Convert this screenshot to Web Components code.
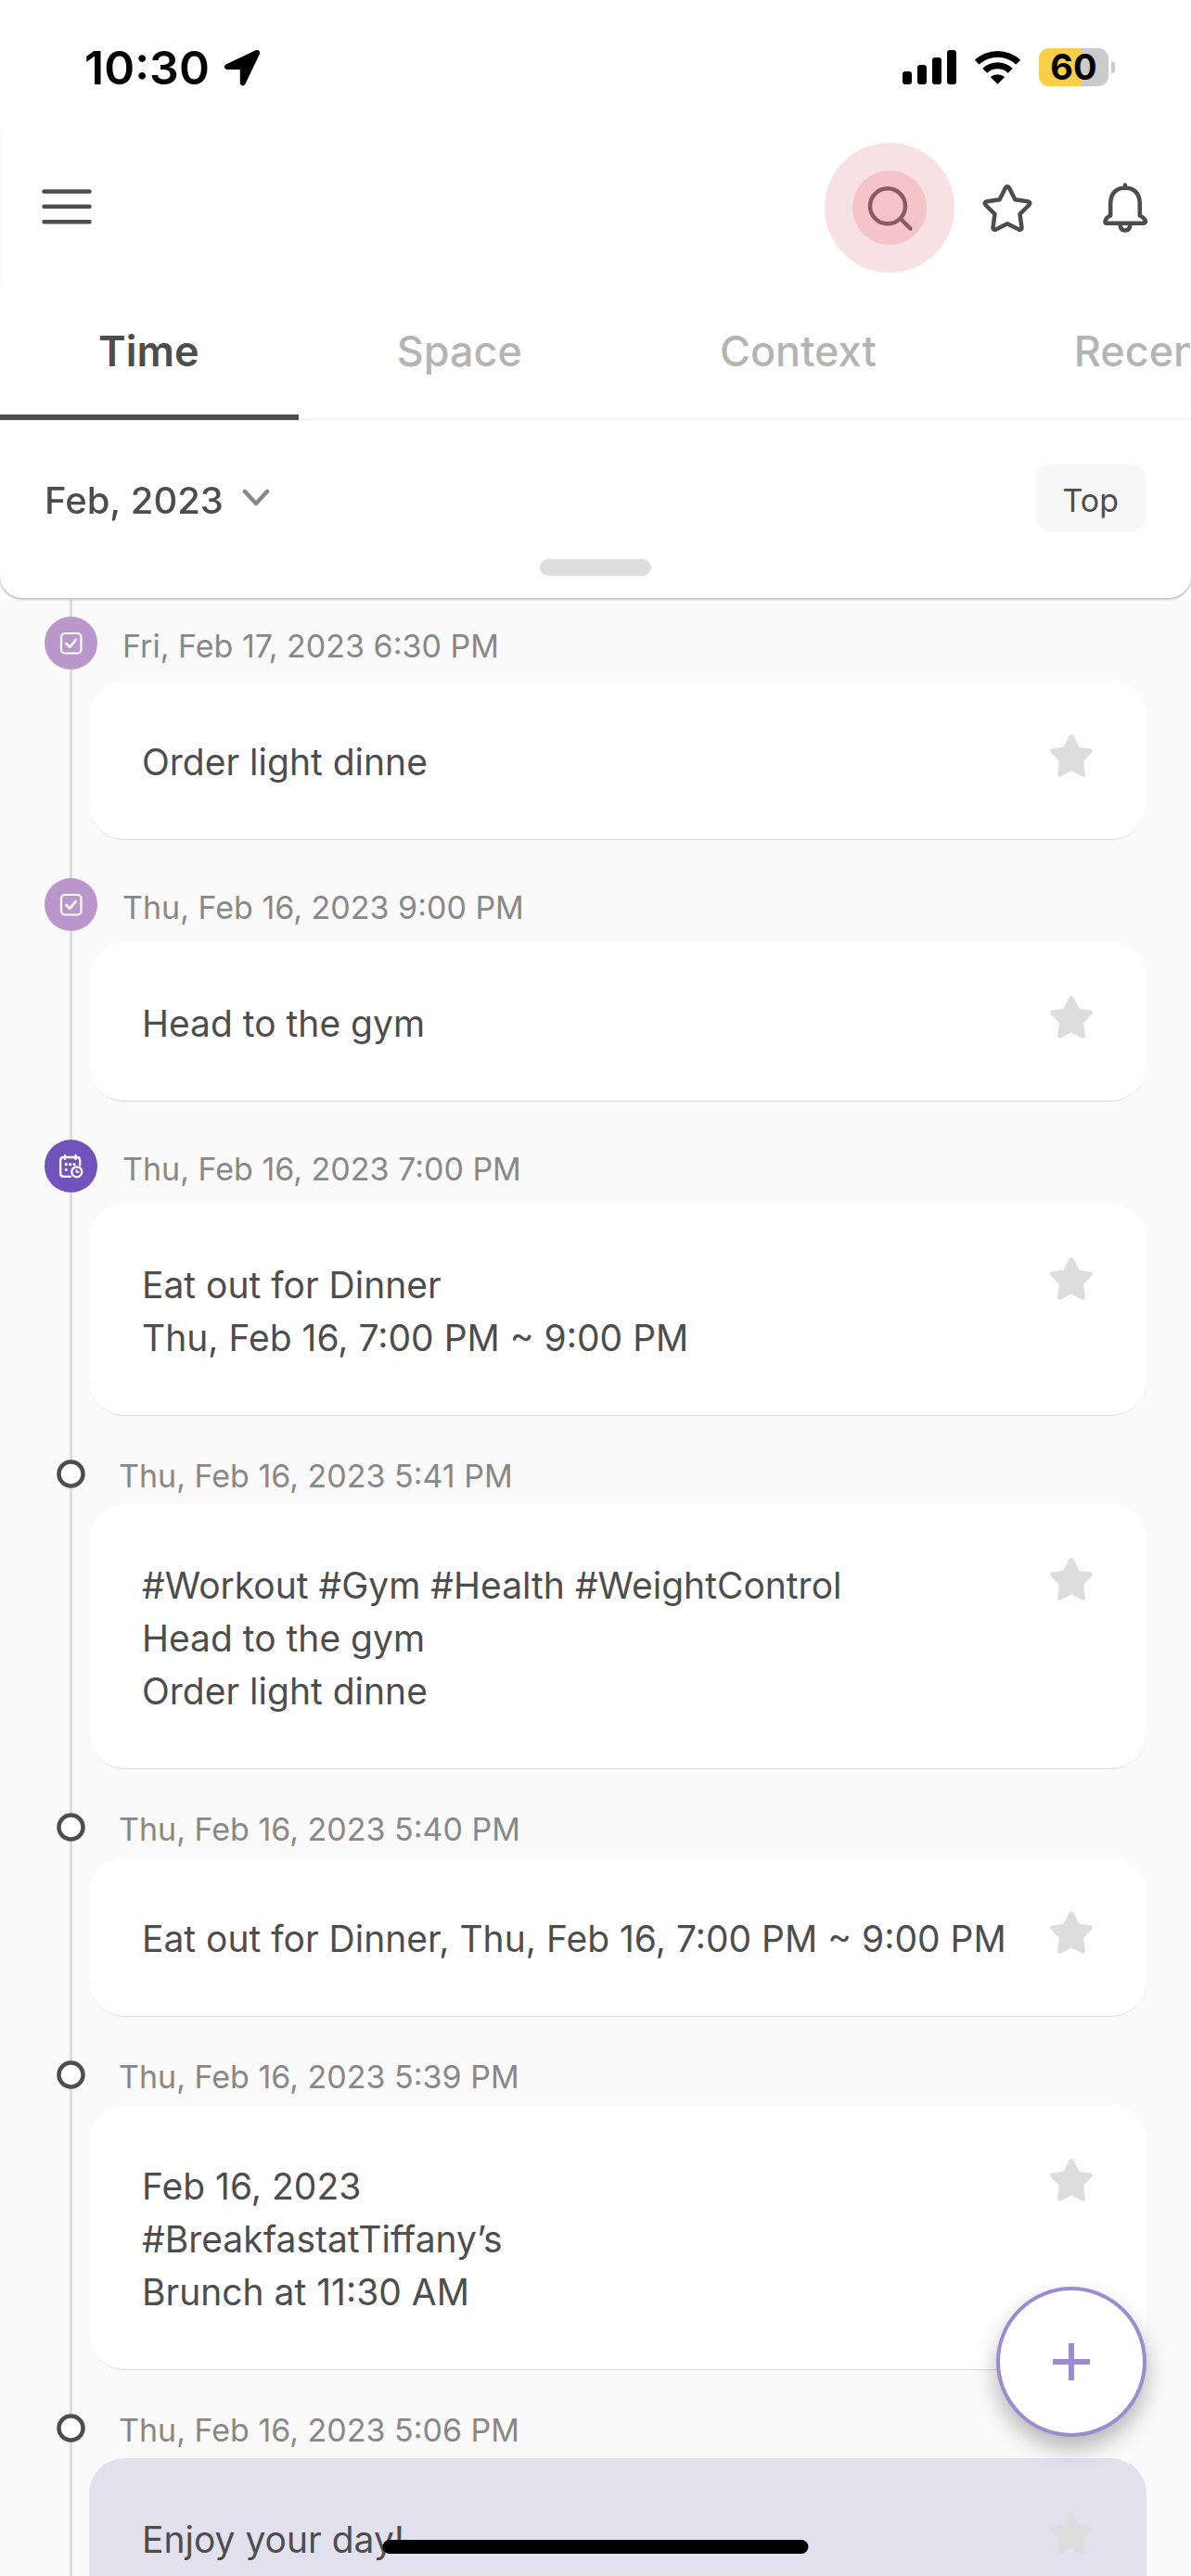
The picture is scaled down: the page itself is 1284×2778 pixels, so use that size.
<!DOCTYPE html>
<html lang="en">
<head>
<meta charset="utf-8">
<meta name="viewport" content="width=device-width, initial-scale=1">
<title>Timeline</title>
<style>
  html, body { margin: 0; height: 100%; }
  body {
    font-family: Inter, "Liberation Sans", sans-serif;
    color: #4d4d4d;
    background: #fff;
    --ink: #4d4d4d;
    --muted: #888;
    --line: #ddd;
    --accent: #9b8bd3;
  }
</style>
</head>
<body>
<memo-app>
  <status-bar slot="top" time="10:30" battery="60"></status-bar>
  <app-header slot="top"></app-header>
  <tab-bar slot="top">
    <tab-item selected>Time</tab-item>
    <tab-item>Space</tab-item>
    <tab-item>Context</tab-item>
    <tab-item>Recent</tab-item>
  </tab-bar>
  <filter-sheet slot="top"></filter-sheet>

  <timeline-entry kind="task" date="Fri, Feb 17, 2023 6:30 PM"><p>Order light dinne</p></timeline-entry>
  <timeline-entry kind="task" date="Thu, Feb 16, 2023 9:00 PM"><p>Head to the gym</p></timeline-entry>
  <timeline-entry kind="event" date="Thu, Feb 16, 2023 7:00 PM"><p>Eat out for Dinner</p><p>Thu, Feb 16, 7:00 PM ~ 9:00 PM</p></timeline-entry>
  <timeline-entry kind="note" date="Thu, Feb 16, 2023 5:41 PM"><p>#Workout #Gym #Health #WeightControl</p><p>Head to the gym</p><p>Order light dinne</p></timeline-entry>
  <timeline-entry kind="note" date="Thu, Feb 16, 2023 5:40 PM"><p>Eat out for Dinner, Thu, Feb 16, 7:00 PM ~ 9:00 PM</p></timeline-entry>
  <timeline-entry kind="note" date="Thu, Feb 16, 2023 5:39 PM"><p>Feb 16, 2023</p><p>#BreakfastatTiffany’s</p><p>Brunch at 11:30 AM</p></timeline-entry>
  <timeline-entry kind="note" tinted date="Thu, Feb 16, 2023 5:06 PM"><p>Enjoy your day!</p></timeline-entry>

  <add-button slot="overlay"></add-button>
  <home-indicator slot="overlay"></home-indicator>
</memo-app>

<script>
const BASE = `
  *, *::before, *::after { box-sizing: border-box; }
  button, select {
    margin: 0; padding: 0; border: 0; background: none;
    font: inherit; color: inherit; cursor: pointer;
  }
  svg { display: block; }
`;

function define(name, render) {
  customElements.define(name, class extends HTMLElement {
    connectedCallback() {
      if (this.shadowRoot) return;
      const root = this.attachShadow({ mode: "open" });
      const tpl = document.createElement("template");
      tpl.innerHTML = `<style>${BASE}</style>` + render(this);
      root.append(tpl.content.cloneNode(true));
    }
  });
}

define("memo-app", () => `
  <style>
    :host { display: flex; flex-direction: column; height: 100vh; overflow: hidden; }
    header { flex: none; position: relative; z-index: 1; }
    main {
      flex: 1; min-height: 0; overflow-y: auto; scrollbar-width: none;
      margin-top: 2px;
      background: #fafafa;
    }
    .rail {
      display: flex; flex-direction: column;
      padding: 0 48px;
      background: linear-gradient(var(--line), var(--line)) 75px 0 / 3px 100% no-repeat;
    }
    ::slotted(timeline-entry:first-of-type) { --lead: 18px; }
  </style>
  <header><slot name="top"></slot></header>
  <main><div class="rail"><slot></slot></div></main>
  <slot name="overlay"></slot>
`);

define("status-bar", el => `
  <style>
    :host {
      display: flex; align-items: center; justify-content: space-between;
      box-sizing: border-box; height: 141px; padding: 4px 82px 0 91px; color: #000;
    }
    .left, .right { display: flex; align-items: center; }
    .left { gap: 15px; }
    .right { gap: 19px; }
    time { font-size: 50px; line-height: 56px; font-weight: 600; }
    .battery { display: flex; align-items: center; gap: 3px; }
    .cell {
      display: flex; align-items: center; justify-content: center;
      width: 75px; height: 41px; border-radius: 11px;
      font-size: 38px; line-height: 41px; font-weight: 700;
      background: linear-gradient(90deg, #f8cf46 60%, #cbcbcb 60%);
    }
    .nub { width: 4px; height: 13px; border-radius: 0 6px 6px 0; background: #cbcbcb; }
  </style>
  <div class="left">
    <time>${el.getAttribute("time")}</time>
    <svg width="40" height="40" viewBox="0 0 40 40" aria-hidden="true">
      <path d="M2.500 16.500 34.500 1.200Q39.500 .2 39 5L23.500 37.500Q21 41.500 17.800 37.500V22H3.500Q-1.500 20 2.500 16.500Z"/>
    </svg>
  </div>
  <div class="right">
    <svg width="58" height="37" viewBox="0 0 58 37" aria-hidden="true">
      <rect x="0" y="23" width="10" height="14" rx="3"/>
      <rect x="16" y="16" width="10" height="21" rx="3"/>
      <rect x="32" y="8" width="10" height="29" rx="3"/>
      <rect x="48" y="0" width="10" height="37" rx="3"/>
    </svg>
    <svg width="51" height="37" viewBox="0 0 51 37" aria-hidden="true">
      <path d="M.8 10.800A36 36 0 0 1 50.200 10.800L45.500 15.500A29.500 29.500 0 0 0 5.500 15.500Z"/>
      <path d="M9.200 19.700A24 24 0 0 1 41.800 19.700L36.800 24.700A16.500 16.500 0 0 0 14.200 24.700Z"/>
      <path d="M17.800 29A12 12 0 0 1 33.200 29L25.500 36.700Z"/>
    </svg>
    <div class="battery">
      <div class="cell">${el.getAttribute("battery")}</div>
      <div class="nub"></div>
    </div>
  </div>
`);

define("app-header", () => `
  <style>
    :host {
      display: flex; align-items: center; justify-content: space-between;
      height: 166px; padding: 0 7px 0 44px;
      border: solid #f8f8f8; border-width: 0 1px;
    }
    nav { display: flex; }
    nav button {
      position: relative;
      display: flex; align-items: center; justify-content: center;
      width: 127px; height: 127px;
    }
    svg { fill: none; stroke: var(--ink); stroke-width: 4.500; stroke-linecap: round; stroke-linejoin: round; position: relative; }
    .search svg { stroke: #8a5c60; }
    .search::before {
      content: ""; position: absolute; inset: 50% auto auto 50%;
      width: 140px; height: 140px; transform: translate(-50%, -50%);
      border-radius: 50%; background: radial-gradient(circle, #f4c4c8 39.500px, #f8e1e3 40.500px);
    }
  </style>
  <button aria-label="Menu">
    <svg width="54" height="54" viewBox="0 0 54 54"><path d="M2.500 9.500h49M2.500 25.800h49M2.500 42.200h49"/></svg>
  </button>
  <nav aria-label="Quick actions">
    <button class="search" aria-label="Search">
      <svg width="60" height="60" viewBox="0 0 60 60"><circle cx="28" cy="28.300" r="19"/><path d="M42.500 42.500 52.500 52.500"/></svg>
    </button>
    <button aria-label="Favorites">
      <svg width="60" height="60" viewBox="0 0 60 60"><path d="M28 8.500Q30 5.500 32 8.500L38.300 21.300 52 23.300Q55.800 24 53.500 27L43.500 36.800 45.500 51.500Q45.500 54.500 42.500 53.500L30 47.300 17.500 53.500Q14.500 54.500 14.500 51.500L16.500 36.800 6.500 27Q4.200 24 8 23.300L21.700 21.300Z"/></svg>
    </button>
    <button aria-label="Notifications">
      <svg width="60" height="60" viewBox="0 0 60 60"><path d="M30 5.500V8.500M14.200 38.500V25Q15 9 30 8.500 45 9 45.800 25V38.500Q51.500 41 52 45.500 51.500 46.700 50 46.700H10Q8.500 46.700 8.500 45.500 8.500 41 14.200 38.500ZM24.500 48Q25 54.500 30 54.500T35.500 48"/></svg>
    </button>
  </nav>
`);

define("tab-bar", () => `
  <style>
    :host {
      display: flex; overflow: hidden; height: 147px;
      border-right: 1px solid #f8f8f8;
      box-shadow: inset 0 -3px #f7f7f7;
    }
  </style>
  <slot></slot>
`);

define("tab-item", el => `
  <style>
    :host { display: block; flex: none; color: #b4b4b4; font-weight: 500; }
    :host([selected]) { color: var(--ink); font-weight: 600; }
    button {
      height: 146px; padding: 44px 107px 40px 106px;
      border-bottom: 6px solid transparent;
      font-size: 45px; line-height: 56px;
    }
    :host([selected]) button { border-color: var(--ink); }
  </style>
  <button role="tab" aria-selected="${el.hasAttribute("selected")}"><slot></slot></button>
`);

define("filter-sheet", () => `
  <style>
    :host {
      display: flex; flex-direction: column; align-items: center; gap: 30px;
      padding: 47px 48px 24px;
      background: #fff; border-radius: 0 0 24px 24px;
      box-shadow: 0 1px 3px rgba(0, 0, 0, .4);
      clip-path: inset(0 0 -6px 0);
    }
    .row { display: flex; align-items: center; justify-content: space-between; width: 100%; height: 72px; }
    .month { display: flex; align-items: center; gap: 19px; }
    select { appearance: none; font-size: 40px; line-height: 72px; height: 72px; padding-top: 3px; font-weight: 500; }
    .top {
      height: 72px; padding: 5px 30px 0; border-radius: 17px;
      background: #f7f7f7; font-size: 34px; line-height: 67px;
    }
    .grip { width: 120px; height: 18px; border-radius: 9px; background: var(--line); }
  </style>
  <div class="row">
    <div class="month">
      <select aria-label="Month"><option>Feb, 2023</option></select>
      <svg width="30" height="20" viewBox="0 0 30 20" aria-hidden="true"><path d="M3 3 15 16 27 3" fill="none" stroke="#888" stroke-width="4.500" stroke-linecap="round" stroke-linejoin="round"/></svg>
    </div>
    <button class="top">Top</button>
  </div>
  <div class="grip"></div>
`);

const MARKERS = {
  task: `<svg width="57" height="57" viewBox="0 0 57 57" fill="none" stroke="#fff" stroke-linecap="round" stroke-linejoin="round" aria-hidden="true">
    <circle cx="28.500" cy="28.500" r="28.500" fill="#bb96cb" stroke="none"/>
    <rect x="18" y="18" width="21.500" height="21.500" rx="4" stroke-width="2.200"/>
    <path d="M23.500 29 27.200 32.800 33.700 25" stroke-width="2.600"/></svg>`,
  event: `<svg width="57" height="57" viewBox="0 0 57 57" fill="none" stroke="#fff" stroke-linecap="round" stroke-linejoin="round" aria-hidden="true">
    <circle cx="28.500" cy="28.500" r="28.500" fill="#7054bb" stroke="none"/>
    <path d="M28 39.800H20.500Q17.200 39.800 17.200 36.500V22.300Q17.200 19 20.500 19H35Q38.200 19 38.200 22.300V27.500M22 17V21M33.500 17V21" stroke-width="2.300"/>
    <path d="M23.300 26.700h.01M27.700 26.700h.01M32.100 26.700h.01M23.300 32.500h.01" stroke-width="3.200"/>
    <circle cx="34.800" cy="34.800" r="5.500" stroke-width="2.300"/>
    <path d="M34.500 32.500V35H36.800" stroke-width="1.700"/></svg>`,
  note: `<svg width="31" height="31" viewBox="0 0 31 31" aria-hidden="true"><circle cx="15.500" cy="15.500" r="13" fill="#fff" stroke="#4d4d4d" stroke-width="4.500"/></svg>`
};

define("timeline-entry", el => `
  <style>
    :host { display: block; --lead-default: 41px; --row: 57px; --trail: 12px; --gap: 27px; }
    :host([kind="note"]) { --lead-default: 38px; --row: 48px; --trail: 9px; --gap: 23px; }
    .head {
      display: flex; align-items: center; gap: var(--gap);
      padding: var(--lead, var(--lead-default)) 0 var(--trail);
    }
    .marker { display: flex; align-items: center; justify-content: center; width: 57px; height: var(--row); }
    time { padding-top: 6px; font-size: 34px; line-height: 42px; color: var(--muted); }
  </style>
  <div class="head">
    <div class="marker">${MARKERS[el.getAttribute("kind")]}</div>
    <time>${el.getAttribute("date")}</time>
  </div>
  <memo-card ${el.hasAttribute("tinted") ? "tinted" : ""}><slot></slot></memo-card>
`);

define("memo-card", () => `
  <style>
    :host {
      display: flex; justify-content: space-between; align-items: flex-start; gap: 24px;
      margin-left: 48px; padding: 57px 58px 55px 57px;
      background: #fff; border-radius: 38px; border-bottom: 1px solid #dadada;
    }
    :host([tinted]) { background: #e4e1ee; border-color: #e4e1ee; }
    .text { padding-top: 2px; font-size: 39px; line-height: 57px; min-width: 0; }
    ::slotted(p) { margin: 0; }
    button { flex: none; }
  </style>
  <div class="text"><slot></slot></div>
  <button aria-label="Mark as favorite" aria-pressed="false">
    <svg width="46" height="48" viewBox="0 0 46 48"><path d="M20.500 2.500Q23 -.5 25.500 2.500L31.500 14.800 44 16.500Q47 17.500 45.500 20.200L36.200 30 38 44.500Q37.500 47.500 34.500 46.500L23 40.500 11.500 46.500Q8.500 47.500 8 44.500L9.800 30 .5 20.200Q-1 17.500 2 16.500L14.500 14.800Z" fill="#ddd"/></svg>
  </button>
`);

define("add-button", () => `
  <style>
    :host { position: fixed; right: 48px; bottom: 150px; z-index: 2; }
    button {
      display: flex; align-items: center; justify-content: center;
      width: 162px; height: 162px; border-radius: 50%;
      border: 4px solid var(--accent); background: #fff;
      box-shadow: 0 12px 24px rgba(0, 0, 0, .28);
    }
  </style>
  <button aria-label="Add"><svg width="40" height="40" viewBox="0 0 40 40"><path d="M20 0V40M0 20H40" stroke="#9b8bd3" stroke-width="6"/></svg></button>
`);

define("home-indicator", () => `
  <style>
    :host {
      position: fixed; left: 50%; bottom: 24px; z-index: 3; transform: translateX(-50%);
      width: 459px; height: 15px; border-radius: 8px; background: #000;
    }
  </style>
`);
</script>
</body>
</html>
